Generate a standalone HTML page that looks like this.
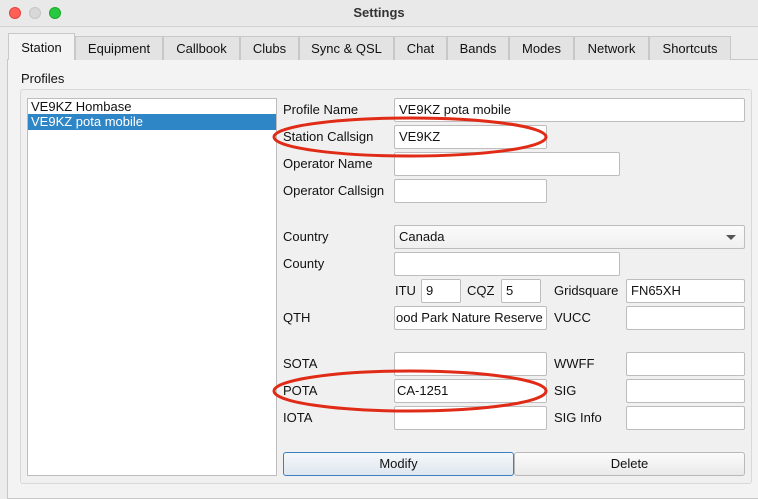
<!DOCTYPE html>
<html><head><style>
*{margin:0;padding:0;box-sizing:border-box}
body{width:758px;height:487px;background:#ececec;font-family:"Liberation Sans",sans-serif;font-size:13px;color:#111;position:relative;overflow:hidden}
.a{position:absolute}
.title{left:0;top:0;width:758px;height:27px;background:#e9e9e9;border-bottom:1px solid #d2d2d2;text-align:center;font-weight:bold;line-height:26px;color:#333}
.dot{width:12px;height:12px;border-radius:6px;top:7px}
.tab{top:36px;height:24px;background:#e3e3e3;border:1px solid #c8c8c8;border-bottom:none;text-align:center;line-height:23px}
.pane{left:7px;top:59px;width:753px;height:440px;background:#f3f3f3;border:1px solid #c8c8c8}
.grp{left:20px;top:89px;width:732px;height:395px;border:1px solid #d8d8d8;border-radius:3px;background:#f0f0f0}
.in{background:#fff;border:1px solid #bdbdbd;border-radius:2px;height:24px;line-height:22px;padding-left:4px;overflow:hidden;white-space:nowrap}
.lb{left:283px;line-height:24px}
.btn{top:452px;height:24px;border:1px solid #b8b8b8;border-radius:3px;background:linear-gradient(#fbfbfb,#eaeaea);text-align:center;line-height:22px}
</style></head><body>
<div class="a title">Settings</div>
<div class="a dot" style="left:9px;background:#fe5f57;border:1px solid #e0443e"></div>
<div class="a dot" style="left:29px;background:#d8d8d8;border:1px solid #c5c5c5"></div>
<div class="a dot" style="left:49px;background:#28c840;border:1px solid #1aab29"></div>
<div class="a pane"></div>
<div class="a tab" style="left:8px;top:33px;width:67px;height:27px;background:#f3f3f3;z-index:2;line-height:27px">Station</div>
<div class="a tab" style="left:75px;width:88px">Equipment</div>
<div class="a tab" style="left:163px;width:77px">Callbook</div>
<div class="a tab" style="left:240px;width:59px">Clubs</div>
<div class="a tab" style="left:299px;width:95px">Sync &amp; QSL</div>
<div class="a tab" style="left:394px;width:53px">Chat</div>
<div class="a tab" style="left:447px;width:62px">Bands</div>
<div class="a tab" style="left:509px;width:65px">Modes</div>
<div class="a tab" style="left:574px;width:75px">Network</div>
<div class="a tab" style="left:649px;width:82px">Shortcuts</div>
<div class="a" style="left:21px;top:71px">Profiles</div>
<div class="a grp"></div>
<div class="a" style="left:27px;top:98px;width:250px;height:378px;background:#fff;border:1px solid #bdbdbd">
<div style="height:15px;line-height:15px;padding-left:3px">VE9KZ Hombase</div>
<div style="height:16px;line-height:15px;padding-left:3px;background:#2e86c6;color:#fff">VE9KZ pota mobile</div>
</div>
<div class="a lb" style="top:98px">Profile Name</div>
<div class="a in" style="left:394px;top:98px;width:351px">VE9KZ pota mobile</div>
<div class="a lb" style="top:125px">Station Callsign</div>
<div class="a in" style="left:394px;top:125px;width:153px">VE9KZ</div>
<div class="a lb" style="top:152px">Operator Name</div>
<div class="a in" style="left:394px;top:152px;width:226px"></div>
<div class="a lb" style="top:179px">Operator Callsign</div>
<div class="a in" style="left:394px;top:179px;width:153px"></div>
<div class="a lb" style="top:225px">Country</div>
<div class="a in" style="left:394px;top:225px;width:351px;background:linear-gradient(#fbfbfb,#efefef)">Canada<span style="position:absolute;right:8px;top:9px;border-left:5px solid transparent;border-right:5px solid transparent;border-top:5px solid #555"></span></div>
<div class="a lb" style="top:252px">County</div>
<div class="a in" style="left:394px;top:252px;width:226px"></div>
<div class="a" style="left:395px;top:279px;line-height:24px">ITU</div>
<div class="a in" style="left:421px;top:279px;width:40px">9</div>
<div class="a" style="left:467px;top:279px;line-height:24px">CQZ</div>
<div class="a in" style="left:501px;top:279px;width:40px">5</div>
<div class="a" style="left:554px;top:279px;line-height:24px">Gridsquare</div>
<div class="a in" style="left:626px;top:279px;width:119px">FN65XH</div>
<div class="a lb" style="top:306px">QTH</div>
<div class="a in" style="left:394px;top:306px;width:153px;padding-left:1px">ood Park Nature Reserve</div>
<div class="a" style="left:554px;top:306px;line-height:24px">VUCC</div>
<div class="a in" style="left:626px;top:306px;width:119px"></div>
<div class="a lb" style="top:352px">SOTA</div>
<div class="a in" style="left:394px;top:352px;width:153px"></div>
<div class="a" style="left:554px;top:352px;line-height:24px">WWFF</div>
<div class="a in" style="left:626px;top:352px;width:119px"></div>
<div class="a lb" style="top:379px">POTA</div>
<div class="a in" style="left:394px;top:379px;width:153px;padding-left:2px">CA-1251</div>
<div class="a" style="left:554px;top:379px;line-height:24px">SIG</div>
<div class="a in" style="left:626px;top:379px;width:119px"></div>
<div class="a lb" style="top:406px">IOTA</div>
<div class="a in" style="left:394px;top:406px;width:153px"></div>
<div class="a" style="left:554px;top:406px;line-height:24px">SIG Info</div>
<div class="a in" style="left:626px;top:406px;width:119px"></div>
<div class="a btn" style="left:283px;width:231px;border-color:#3b7fc4;background:linear-gradient(#f4f8fc,#dfe6ee)">Modify</div>
<div class="a btn" style="left:514px;width:231px">Delete</div>
<svg class="a" style="left:0;top:0" width="758" height="487">
<ellipse cx="410" cy="137" rx="136" ry="19" fill="none" stroke="#e02b17" stroke-width="3"/>
<ellipse cx="410" cy="391" rx="136" ry="20" fill="none" stroke="#e02b17" stroke-width="3"/>
</svg>
</body></html>
